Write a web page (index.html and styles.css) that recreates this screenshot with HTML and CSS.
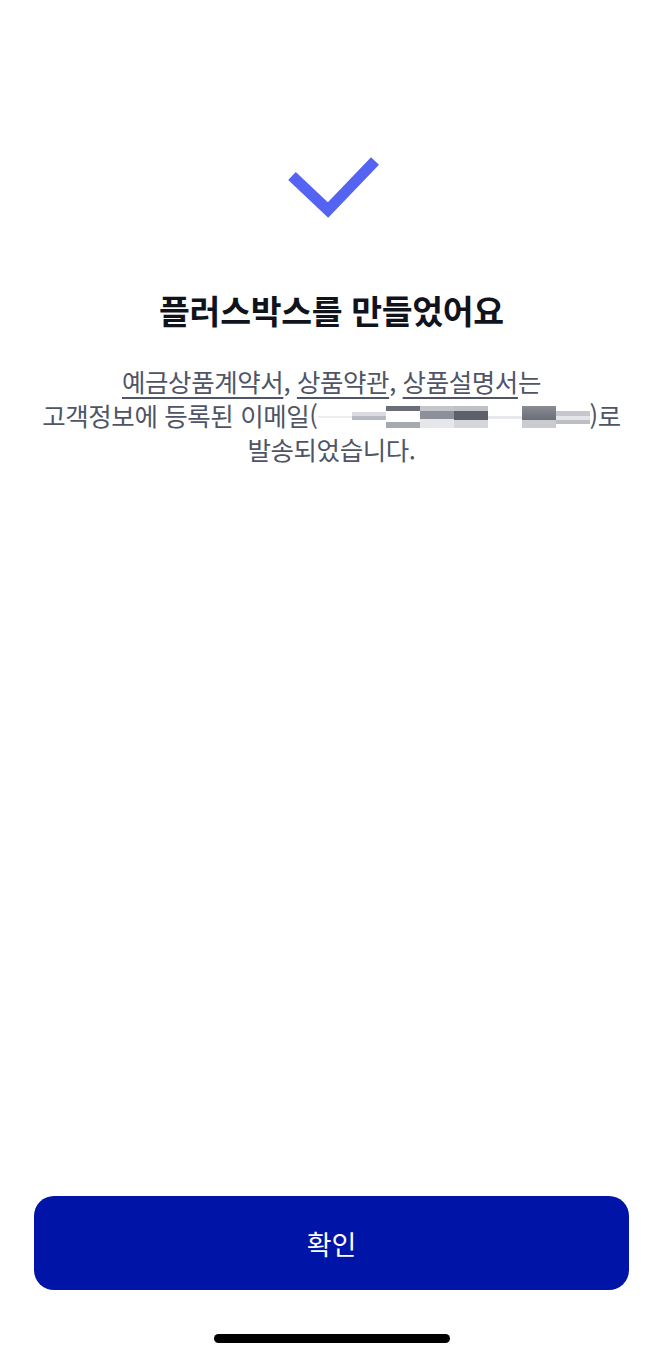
FILE: index.html
```html
<!DOCTYPE html>
<html lang="ko">
<head>
    <meta charset="UTF-8">
    <meta name="viewport" content="width=device-width, initial-scale=1.0">
    <title>플러스박스 개설 완료</title>
    <link rel="stylesheet" href="styles.css">
</head>
<body>
    <main class="screen">
        <div class="result">
            <svg class="check" width="100" height="70" viewBox="0 0 100 70">
                <path d="M9 24 L45 58 L92 9" fill="none" stroke="#5463f1" stroke-width="11"/>
            </svg>
            <h1 class="title">플러스박스를 만들었어요</h1>
            <p class="desc">
                <a href="#" class="doc">예금상품계약서</a>, <a href="#" class="doc">상품약관</a>, <a href="#" class="doc">상품설명서</a>는<br>
                고객정보에 등록된 이메일(<span class="masked"><i class="m1"></i><i class="m2"></i><i class="m3"></i><i class="m4"></i><i class="m5"></i><i class="m6"></i><i class="m7"></i><i class="m8"></i></span>)로<br>
                발송되었습니다.
            </p>
        </div>
        <div class="bottom">
            <button class="confirm">확인</button>
            <div class="home-bar"></div>
        </div>
    </main>
</body>
</html>
```

FILE: styles.css
```css
body {
    margin: 0;
    background: #fff;
    font-family: "Noto Sans CJK KR", "Noto Sans", sans-serif;
}
.screen {
    height: 1357px;
    display: flex;
    flex-direction: column;
    justify-content: space-between;
}
.result {
    display: flex;
    flex-direction: column;
    align-items: center;
    padding-top: 152px;
}
.check {
    display: block;
    margin-left: 2px;
}
.title {
    margin: 66px 0 0;
    font-size: 33.5px;
    font-weight: 700;
    color: #11131c;
    letter-spacing: -0.3px;
    line-height: 44px;
}
.desc {
    margin: 32px 0 0;
    text-align: center;
    font-size: 25.5px;
    line-height: 34px;
    color: #4f5566;
    letter-spacing: -0.4px;
}
.doc {
    color: #4f5566;
    text-decoration: underline;
    text-decoration-thickness: 1.5px;
    text-underline-offset: 5px;
}
.masked {
    display: inline-flex;
    align-items: center;
    width: 272px;
    height: 22px;
    vertical-align: -2px;
}
.masked i {
    display: block;
    flex: 1;
    height: 22px;
}
.m1 { background: linear-gradient(#fff 45%, #eceef1 45%, #eceef1 55%, #fff 55%); }
.m2 { background: linear-gradient(#fff 28%, #d9dbe0 28%, #d9dbe0 45%, #b7bac2 45%, #b7bac2 62%, #fff 62%); }
.m3 { background: linear-gradient(#6b6e78 0, #6b6e78 25%, #fff 25%, #fff 75%, #a6a9b0 75%); }
.m4 { background: linear-gradient(#c4c6cc 0, #c4c6cc 25%, #8d9099 25%, #8d9099 60%, #e6e7ea 60%); }
.m5 { background: linear-gradient(#bfc1c7 0, #bfc1c7 25%, #5d6069 25%, #5d6069 65%, #d4d6da 65%); }
.m6 { background: linear-gradient(#fff 45%, #e8e9ec 45%, #e8e9ec 58%, #fff 58%); }
.m7 { background: linear-gradient(#8a8c94 0, #6a6d76 65%, #c9cbd0 65%); }
.m8 { background: linear-gradient(#fff 25%, #c5c7cd 25%, #c5c7cd 45%, #e4e5e8 45%, #e4e5e8 65%, #bcbec4 65%, #bcbec4 80%, #fff 80%); }
.bottom {
    display: flex;
    flex-direction: column;
    align-items: center;
    padding: 0 34px 14px 34px;
}
.confirm {
    width: 100%;
    height: 94px;
    border: none;
    border-radius: 20px;
    background: #0014a8;
    color: #fff;
    font-family: "Noto Sans CJK KR", sans-serif;
    font-size: 27px;
    font-weight: 400;
    cursor: pointer;
}
.home-bar {
    margin-top: 44px;
    width: 236px;
    height: 9px;
    border-radius: 5px;
    background: #000;
}
```
